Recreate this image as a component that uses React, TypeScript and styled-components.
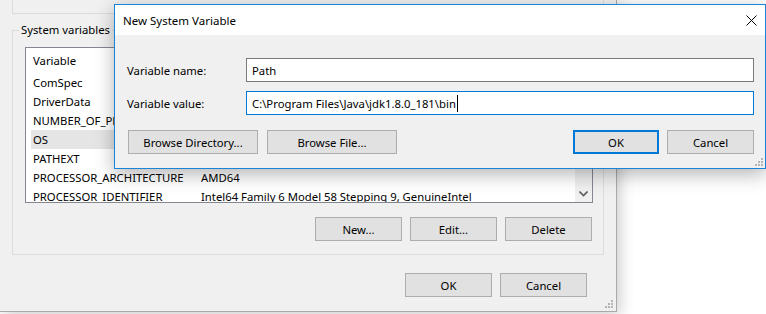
import React from "react";
import styled, { createGlobalStyle } from "styled-components";

const GlobalStyle = createGlobalStyle`
  html, body { margin: 0; padding: 0; background: #ffffff; }
  body {
    font-family: "Noto Sans", "Segoe UI", "Liberation Sans", sans-serif;
    font-size: 11.3px;
    color: #000;
  }
  * { box-sizing: border-box; }
`;

const Desktop = styled.div`
  position: relative;
  width: 766px;
  height: 314px;
  overflow: hidden;
  background: #ffffff;
`;

/* ---------- background window (Environment Variables) ---------- */

const BackWindow = styled.div`
  position: relative;
  width: 617px;
  height: 312px;
  background: #f0f0f0;
  border-right: 1px solid #a9a9a9;
  border-bottom: 1px solid #a9a9a9;
  box-shadow: 3px 3px 14px rgba(0, 0, 0, 0.2);
  display: flex;
  flex-direction: column;
`;

const GroupStub = styled.div`
  margin-left: 12px;
  width: 592px;
  height: 14px;
  border: 1px solid #dcdcdc;
  border-top: none;
`;

const GroupBox = styled.fieldset`
  margin: 8px 0 0 12px;
  padding: 0;
  width: 592px;
  border: 1px solid #dcdcdc;
  min-inline-size: 0;
`;

const GroupLegend = styled.legend`
  margin-left: 6px;
  padding: 0 2px;
  line-height: 16px;
  font-size: 11.3px;
`;

const GroupBody = styled.div`
  padding: 9px 10px 13px 12px;
  display: flex;
  flex-direction: column;
`;

const ListBox = styled.div`
  width: 568px;
  height: 156px;
  border: 1px solid #828790;
  background: #ffffff;
  display: flex;
  overflow: hidden;
`;

const ListContent = styled.div`
  flex: 1;
  display: flex;
  flex-direction: column;
  overflow: hidden;
`;

const ListHeader = styled.div`
  height: 25px;
  flex: none;
  display: flex;
  align-items: center;
  padding-left: 7px;
`;

const ListRow = styled.div<{ $selected?: boolean }>`
  height: 19px;
  flex: none;
  display: flex;
  align-items: center;
  margin-left: 5px;
  padding-left: 2px;
  white-space: nowrap;
  background: ${(p) => (p.$selected ? "#e5e5e5" : "transparent")};
`;

const NameCell = styled.span`
  width: 168px;
  flex: none;
  overflow: hidden;
`;

const ValueCell = styled.span`
  flex: 1;
  overflow: hidden;
`;

const ScrollBar = styled.div`
  width: 17px;
  flex: none;
  background: #f0f0f0;
  display: flex;
  flex-direction: column;
  justify-content: flex-end;
`;

const ScrollArrow = styled.div`
  width: 17px;
  height: 17px;
  display: flex;
  align-items: center;
  justify-content: center;
`;

const ButtonRow = styled.div<{ $top: number; $right: number }>`
  display: flex;
  justify-content: flex-end;
  gap: 8px;
  margin-top: ${(p) => p.$top}px;
  margin-right: ${(p) => p.$right}px;
`;

const WinButton = styled.button<{ $w: number; $focused?: boolean }>`
  width: ${(p) => p.$w}px;
  height: 24px;
  padding: 0;
  margin: 0;
  background: #e1e1e1;
  border: ${(p) => (p.$focused ? "2px solid #0078d7" : "1px solid #adadad")};
  font-family: inherit;
  font-size: 11.3px;
  color: #000;
  display: flex;
  align-items: center;
  justify-content: center;
  flex: none;
`;

const Grip = styled.svg<{ $right: number; $bottom: number }>`
  position: absolute;
  right: ${(p) => p.$right}px;
  bottom: ${(p) => p.$bottom}px;
`;

/* ---------- foreground dialog (New System Variable) ---------- */

const Dialog = styled.div`
  position: absolute;
  left: 114px;
  top: 4px;
  width: 652px;
  height: 165px;
  border: 1px solid #1883d7;
  background: #f0f0f0;
  box-shadow: 0 5px 18px rgba(0, 0, 0, 0.3);
  display: flex;
  flex-direction: column;
`;

const TitleBar = styled.div`
  height: 30px;
  flex: none;
  background: #ffffff;
  display: flex;
  align-items: center;
  justify-content: space-between;
  padding: 0 8px 0 8px;
`;

const Title = styled.span`
  font-size: 11.5px;
`;

const DialogBody = styled.div`
  flex: 1;
  padding: 23px 11px 0 12px;
  display: flex;
  flex-direction: column;
  gap: 9px;
`;

const FieldRow = styled.div`
  display: grid;
  grid-template-columns: 119px 1fr;
  align-items: center;
`;

const FieldInput = styled.div<{ $focused?: boolean }>`
  height: 24px;
  background: #ffffff;
  border: 1px solid ${(p) => (p.$focused ? "#0078d7" : "#7a7a7a")};
  padding-left: 5px;
  display: flex;
  align-items: center;
  white-space: nowrap;
`;

const Caret = styled.span`
  display: inline-block;
  width: 1px;
  height: 17px;
  background: #000;
  margin-left: 1px;
`;

const DialogButtons = styled.div`
  display: flex;
  align-items: center;
  gap: 9px;
  margin-top: 6px;
  margin-left: 1px;
`;

const Spacer = styled.div`
  flex: 1;
`;

const OkCancel = styled.div`
  display: flex;
  gap: 8px;
`;

const rows: [string, string][] = [
  ["ComSpec", "C:\\WINDOWS\\system32\\cmd.exe"],
  ["DriverData", "C:\\Windows\\System32\\Drivers\\DriverData"],
  ["NUMBER_OF_PROCESSORS", "4"],
  ["OS", "Windows_NT"],
  ["PATHEXT", ".COM;.EXE;.BAT;.CMD;.VBS;.VBE;.JS;.JSE;.WSF;.WSH;.MSC"],
  ["PROCESSOR_ARCHITECTURE", "AMD64"],
  ["PROCESSOR_IDENTIFIER", "Intel64 Family 6 Model 58 Stepping 9, GenuineIntel"],
  ["PROCESSOR_LEVEL", "6"],
];

const GripIcon: React.FC<{ right: number; bottom: number }> = ({ right, bottom }) => (
  <Grip $right={right} $bottom={bottom} width="9" height="9" viewBox="0 0 9 9">
    <g fill="#b4b4b4">
      <rect x="7" y="1" width="2" height="2" />
      <rect x="4" y="4" width="2" height="2" />
      <rect x="7" y="4" width="2" height="2" />
      <rect x="1" y="7" width="2" height="2" />
      <rect x="4" y="7" width="2" height="2" />
      <rect x="7" y="7" width="2" height="2" />
    </g>
  </Grip>
);

export default function App() {
  return (
    <>
      <GlobalStyle />
      <Desktop>
        <BackWindow>
          <GroupStub />
          <GroupBox>
            <GroupLegend>System variables</GroupLegend>
            <GroupBody>
              <ListBox>
                <ListContent>
                  <ListHeader>
                    <NameCell>Variable</NameCell>
                    <ValueCell>Value</ValueCell>
                  </ListHeader>
                  {rows.map(([n, v]) => (
                    <ListRow key={n} $selected={n === "OS"}>
                      <NameCell>{n}</NameCell>
                      <ValueCell>{v}</ValueCell>
                    </ListRow>
                  ))}
                </ListContent>
                <ScrollBar>
                  <ScrollArrow>
                    <svg width="9" height="6" viewBox="0 0 9 6">
                      <path d="M0.5 0.5 L4.5 4.5 L8.5 0.5" fill="none" stroke="#606060" strokeWidth="1.6" />
                    </svg>
                  </ScrollArrow>
                </ScrollBar>
              </ListBox>
              <ButtonRow $top={14} $right={1}>
                <WinButton $w={87}>New...</WinButton>
                <WinButton $w={87}>Edit...</WinButton>
                <WinButton $w={87}>Delete</WinButton>
              </ButtonRow>
            </GroupBody>
          </GroupBox>
          <ButtonRow $top={18} $right={29}>
            <WinButton $w={87}>OK</WinButton>
            <WinButton $w={87}>Cancel</WinButton>
          </ButtonRow>
          <GripIcon right={3} bottom={3} />
        </BackWindow>

        <Dialog>
          <TitleBar>
            <Title>New System Variable</Title>
            <svg width="11" height="11" viewBox="0 0 11 11">
              <path d="M0.5 0.5 L10.5 10.5 M10.5 0.5 L0.5 10.5" stroke="#000" strokeWidth="1" />
            </svg>
          </TitleBar>
          <DialogBody>
            <FieldRow>
              <span>Variable name:</span>
              <FieldInput>Path</FieldInput>
            </FieldRow>
            <FieldRow>
              <span>Variable value:</span>
              <FieldInput $focused>
                C:\Program Files\Java\jdk1.8.0_181\bin
                <Caret />
              </FieldInput>
            </FieldRow>
            <DialogButtons>
              <WinButton $w={130}>Browse Directory...</WinButton>
              <WinButton $w={130}>Browse File...</WinButton>
              <Spacer />
              <OkCancel>
                <WinButton $w={86} $focused>OK</WinButton>
                <WinButton $w={87}>Cancel</WinButton>
              </OkCancel>
            </DialogButtons>
          </DialogBody>
          <GripIcon right={2} bottom={2} />
        </Dialog>
      </Desktop>
    </>
  );
}
